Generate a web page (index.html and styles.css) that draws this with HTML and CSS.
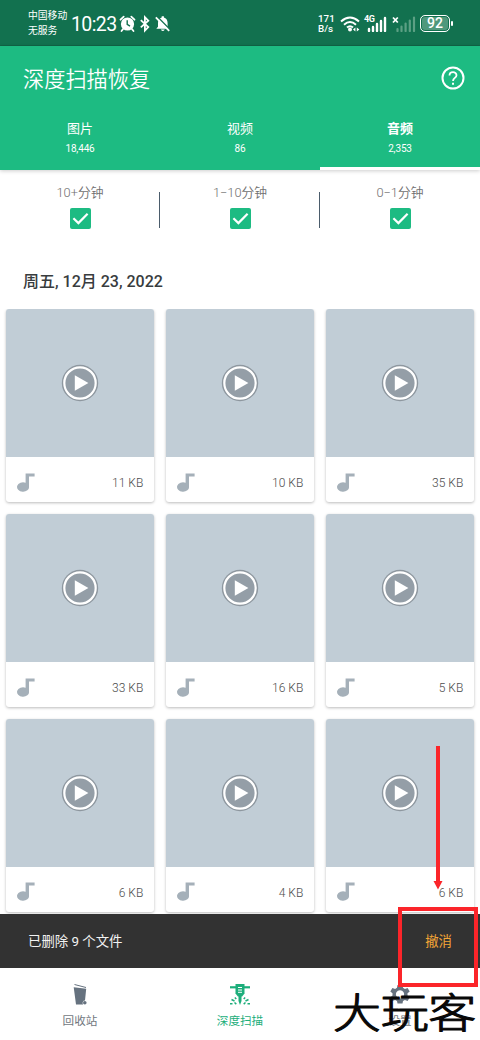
FILE: index.html
```html
<!DOCTYPE html>
<html lang="zh-CN">
<head>
<meta charset="utf-8">
<title>深度扫描恢复</title>
<link rel="stylesheet" href="styles.css">
</head>
<body>
<svg class="defs" width="0" height="0">
  <symbol id="play" viewBox="0 0 38 38">
    <circle cx="19" cy="19" r="18.2" fill="#8e979f"/>
    <circle cx="19" cy="19" r="15.700" fill="#949ea7" stroke="#fff" stroke-width="2.200"/>
    <path d="M13.800 11.200v15.600L27.400 19z" fill="#fff"/>
  </symbol>
  <symbol id="note" viewBox="0 0 18 19">
    <path d="M8.600 0.500H17.600V3.600H12V13.500A6 4.700 0 1 1 8.600 9.800z" fill="#a5b0b9"/>
  </symbol>
  <symbol id="check" viewBox="0 0 21 21">
    <rect width="21" height="21" rx="2" fill="#1dbb82"/>
    <path d="M3.400 10.300l5 4.800 9.200-9.400" fill="none" stroke="#fff" stroke-width="2.200"/>
  </symbol>
</svg>
<div class="screen">
  <header class="status">
    <div class="carrier"><span>中国移动</span><span>无服务</span></div>
    <div class="clock">10:23</div>
    <svg class="status-left" width="52" height="18" viewBox="0 0 52 18">
      <circle cx="8.500" cy="9" r="6.600" fill="#fff"/>
      <path d="M1.500 4.700L4.700 1.700M15.500 4.700L12.300 1.700M4 14.200L2.500 16M13 14.200L14.500 16" stroke="#fff" stroke-width="1.800" stroke-linecap="round"/>
      <path d="M8.200 5.200V9.400L11 11.200" fill="none" stroke="#12714f" stroke-width="1.400"/>
      <path d="M21.800 5.200L29.300 12 25.900 15.600V2.200L29.300 5.600 21.800 12.400" fill="none" stroke="#fff" stroke-width="1.800"/>
      <path d="M37.300 13.800H50.200l-1.600-2V8c0-2.900-1.500-4.900-3.700-5.400V1.300h-2.200v1.300C40.400 3.200 39 5.200 39 8v3.800zM41.800 14.500h4q-2 3.200-4 0z" fill="#fff"/>
      <path d="M38.400 1.800L51.400 15" stroke="#12714f" stroke-width="1.500"/>
      <path d="M36.800 2.300L50.200 15.800" stroke="#fff" stroke-width="1.800"/>
    </svg>
    <div class="speed"><span>171</span><span>B/s</span></div>
    <svg class="wifi" width="20" height="16" viewBox="0 0 20 16">
      <path d="M1 5.400Q10-2.400 19 5.400M4 8.700Q10 3.400 16 8.700M7 11.600Q10 8.800 13 11.600" fill="none" stroke="#fff" stroke-width="2"/>
      <circle cx="10" cy="13.400" r="2" fill="#fff"/>
      <path d="M13 13.500l2.400-2v4zM19.400 13.500l-2.600-2v4z" fill="#fff"/>
    </svg>
    <div class="signal">
      <span class="gen">4G</span>
      <svg width="23" height="16" viewBox="0 0 23 16"><path d="M5 13v2M9 11v4M13 8v7M17 5v10M21 2v13" stroke="#fff" stroke-width="2.400" stroke-linecap="round"/></svg>
    </div>
    <svg class="signal-off" width="24" height="16" viewBox="0 0 24 16"><path d="M5.500 13v2M9.500 10.500v4.500M13.600 7.500V15M17.800 4.500V15M22 1.500V15" stroke="#5ca084" stroke-width="2.200" stroke-linecap="round"/><path d="M1 1.500l4.800 5M5.800 1.500L1 6.500" stroke="#fff" stroke-width="1.800"/></svg>
    <div class="battery">92</div>
    <i class="battery-tip"></i>
  </header>

  <section class="appbar">
    <div class="title-row">
      <h1>深度扫描恢复</h1>
      <svg width="24" height="24" viewBox="0 0 24 24" fill="none" stroke="#fff"><circle cx="12" cy="12" r="10.500" stroke-width="2"/><path d="M8.500 9.500c0-4.500 7-4.300 7-.3 0 2.700-3.500 2.800-3.500 5.800" stroke-width="1.800"/><path d="M12 16.700v2" stroke-width="2"/></svg>
    </div>
    <nav class="tabs">
      <div class="tab"><b>图片</b><span>18,446</span></div>
      <div class="tab"><b>视频</b><span>86</span></div>
      <div class="tab active"><b>音频</b><span>2,353</span></div>
    </nav>
  </section>

  <section class="filters">
    <div class="filter"><span>10+分钟</span><svg width="21" height="21"><use href="#check"/></svg></div>
    <div class="filter"><span>1−10分钟</span><svg width="21" height="21"><use href="#check"/></svg></div>
    <div class="filter"><span>0−1分钟</span><svg width="21" height="21"><use href="#check"/></svg></div>
  </section>

  <h2>周五, 12月 23, 2022</h2>

  <main class="grid">
    <article class="card"><div class="thumb"><svg width="38" height="38"><use href="#play"/></svg></div><footer><svg width="18" height="19"><use href="#note"/></svg><span>11 KB</span></footer></article>
    <article class="card"><div class="thumb"><svg width="38" height="38"><use href="#play"/></svg></div><footer><svg width="18" height="19"><use href="#note"/></svg><span>10 KB</span></footer></article>
    <article class="card"><div class="thumb"><svg width="38" height="38"><use href="#play"/></svg></div><footer><svg width="18" height="19"><use href="#note"/></svg><span>35 KB</span></footer></article>
    <article class="card"><div class="thumb"><svg width="38" height="38"><use href="#play"/></svg></div><footer><svg width="18" height="19"><use href="#note"/></svg><span>33 KB</span></footer></article>
    <article class="card"><div class="thumb"><svg width="38" height="38"><use href="#play"/></svg></div><footer><svg width="18" height="19"><use href="#note"/></svg><span>16 KB</span></footer></article>
    <article class="card"><div class="thumb"><svg width="38" height="38"><use href="#play"/></svg></div><footer><svg width="18" height="19"><use href="#note"/></svg><span>5 KB</span></footer></article>
    <article class="card"><div class="thumb"><svg width="38" height="38"><use href="#play"/></svg></div><footer><svg width="18" height="19"><use href="#note"/></svg><span>6 KB</span></footer></article>
    <article class="card"><div class="thumb"><svg width="38" height="38"><use href="#play"/></svg></div><footer><svg width="18" height="19"><use href="#note"/></svg><span>4 KB</span></footer></article>
    <article class="card"><div class="thumb"><svg width="38" height="38"><use href="#play"/></svg></div><footer><svg width="18" height="19"><use href="#note"/></svg><span>6 KB</span></footer></article>
  </main>

  <div class="snackbar"><span>已删除 9 个文件</span><a>撤消</a></div>

  <nav class="bottom">
    <div class="item">
      <svg width="24" height="24" viewBox="0 0 24 24"><path d="M6.500 2.500L18 5.500" stroke="#66727f" stroke-width="1"/><path d="M5.700 5.200L18.200 6.700 17 18.500a2.400 2.400 0 0 0-1.800 4H8z" fill="#66727f"/><circle cx="16.800" cy="20.800" r="1.800" fill="#66727f"/></svg>
      <span>回收站</span>
    </div>
    <div class="item on">
      <svg width="24" height="24" viewBox="0 0 24 24"><path d="M2 4.200h20v2.200H2z" fill="#1dae7b"/><path d="M7.500 2h9v9.500l-2.400 3H9.900l-2.400-3z" fill="#1dae7b"/><path d="M10.500 14h3v5L12 23l-1.500-4z" fill="#1dae7b"/><path d="M10 5.500h4M10 8h4M10 10.300h4" stroke="#fff" stroke-width="1"/><path d="M6.800 15.500l1.500 1.500M3.500 17.500l3 1.500M2 21.800h2.500M6.500 20.500l1.800 1.600M17.200 15.500l-1.500 1.500M20.500 17.500l-3 1.500M22 21.800h-2.500M17.500 20.500l-1.800 1.600" stroke="#1dae7b" stroke-width="1.500"/></svg>
      <span>深度扫描</span>
    </div>
    <div class="item">
      <svg width="24" height="24" viewBox="0 0 24 24"><path fill="#66727f" fill-rule="evenodd" d="M9.500 3h5l.5 2.800 1.900 1.100 2.700-1 2.100 3.500-2.200 1.900v2.200l2.200 1.900-2.100 3.500-2.700-1-1.900 1.100-.5 2.500h-5L9 19l-1.900-1.100-2.700 1-2.100-3.500 2.200-1.900v-2.200L2.300 9.400l2.100-3.500 2.700 1L9 5.800zM12 8.200a4.100 4.100 0 1 0 .01 0z"/></svg>
      <span>设置</span>
    </div>
  </nav>

  <svg class="arrow" width="10" height="144" viewBox="0 0 10 144"><path d="M3 0h4v135h2.500L5 143.500.5 135H3z" fill="#fb252a"/></svg>
  <div class="highlight"></div>
  <svg class="watermark" width="150" height="60" viewBox="0 0 150 60"><text transform="translate(1 47.500) scale(1 .86)">大玩客</text></svg>
</div>
</body>
</html>
```
FILE: styles.css
```css
* { box-sizing: border-box; }
body { margin: 0; background: #fff; font-family: Roboto, "Noto Sans CJK SC", sans-serif; }
.defs { position: absolute; }
svg { display: block; flex: none; }
.screen { position: relative; width: 480px; height: 1040px; overflow: hidden; display: flex; flex-direction: column; }

.status { height: 46px; flex: none; display: flex; align-items: center; background: #12714f; color: #fff; padding: 2px 0 0 28px; border-bottom: 1px solid #116547; }
.carrier { width: 43px; display: flex; flex-direction: column; font-size: 9.8px; line-height: 14.5px; white-space: nowrap; }
.clock { width: 48px; padding-top: 2px; font-size: 19.5px; line-height: 24px; letter-spacing: -0.6px; white-space: nowrap; }
.status-left { width: 52px; }
.speed { margin-left: 147px; width: 22px; display: flex; flex-direction: column; font-size: 9.8px; line-height: 9.5px; font-weight: 500; white-space: nowrap; }
.signal { position: relative; width: 24px; margin-left: 4px; }
.gen { position: absolute; left: 0; top: -1px; font-size: 9px; line-height: 9px; font-weight: 700; letter-spacing: -0.5px; background: #12714f; }
.signal-off { margin-left: 4px; }
.battery { width: 30px; height: 17px; margin-left: 4px; border: 1.6px solid #fff; border-radius: 5px; background: #4f987c; box-shadow: inset 0 0 0 1px #12714f; font-size: 14px; line-height: 15px; font-weight: 500; text-align: center; }
.battery-tip { width: 2px; height: 5px; background: #fff; margin-left: 1px; border-radius: 1px; }

.appbar { height: 124px; flex: none; background: #1dbb82; color: #fff; display: flex; flex-direction: column; position: relative; box-shadow: 0 1px 4px #0003; }
.title-row { height: 66px; display: flex; justify-content: space-between; align-items: center; padding: 0 15px 0 23px; }
.title-row svg { margin-bottom: 2px; }
h1 { margin: 2px 0 0; font-size: 21.2px; line-height: 30px; font-weight: 350; }
.tabs { display: grid; grid-template-columns: repeat(3, 160px); height: 59px; }
.tab { display: flex; flex-direction: column; align-items: center; padding-top: 8px; border-bottom: 3px solid transparent; }
.tab b { font-size: 13px; line-height: 20px; font-weight: 400; }
.tab span { font-size: 10px; line-height: 14px; margin-top: 3px; letter-spacing: -0.15px; }
.tab.active { border-color: #fff; }
.tab.active b { font-weight: 700; }

.filters { height: 79px; flex: none; display: grid; grid-template-columns: repeat(3, 160px); padding-top: 13px; }
.filter { height: 60px; display: flex; flex-direction: column; align-items: center; gap: 5px; color: #707070; font-size: 12.8px; line-height: 20px; font-weight: 350; background: linear-gradient(#4b5c6b, #4b5c6b) right 9px / 1.5px 36px no-repeat; }
.filter:last-child { background: none; }
h2 { margin: 21px 0 15px 23px; height: 24px; flex: none; font-size: 16px; line-height: 24px; font-weight: 500; color: #383c3e; white-space: nowrap; }

.grid { height: 605px; flex: none; overflow: hidden; display: grid; grid-template-columns: repeat(3, 148.6px); grid-auto-rows: 193.3px; gap: 11.5px 11.4px; padding-left: 5.7px; }
.card { border-radius: 3px; box-shadow: 0 1px 3px #0004; background: #fff; overflow: hidden; }
.thumb { height: 148.4px; background: #c1cdd6; display: flex; align-items: center; justify-content: center; }
.card footer { height: 44px; display: flex; justify-content: space-between; align-items: center; padding: 6px 11px 0 11px; }
.card footer span { margin-top: 2px; font-size: 12px; line-height: 16px; font-weight: 300; color: #4c4c4c; }

.snackbar { height: 54px; flex: none; background: #323232; color: #f2f2f2; display: flex; justify-content: space-between; align-items: center; padding: 0 28px 3px; font-size: 13.4px; }
.snackbar a { color: #f3a536; }
.bottom { height: 72px; flex: none; display: grid; grid-template-columns: repeat(3, 160px); background: #fff; }
.item { display: flex; flex-direction: column; align-items: center; padding-top: 14px; gap: 6px; color: #72787e; font-size: 11.6px; line-height: 18px; }
.item.on { color: #1dae7b; }

.arrow { position: absolute; left: 433px; top: 746px; }
.highlight { position: absolute; left: 398px; top: 907px; width: 80px; height: 80px; border: 4px solid #fb252a; }
.watermark { position: absolute; left: 332px; top: 980px; overflow: visible; }
.watermark text { font-family: "Noto Sans CJK SC", sans-serif; font-size: 48px; font-weight: 300; fill: #080808; stroke: #080808; stroke-width: 1.3px; stroke-linejoin: round; letter-spacing: -0.3px; }
```
